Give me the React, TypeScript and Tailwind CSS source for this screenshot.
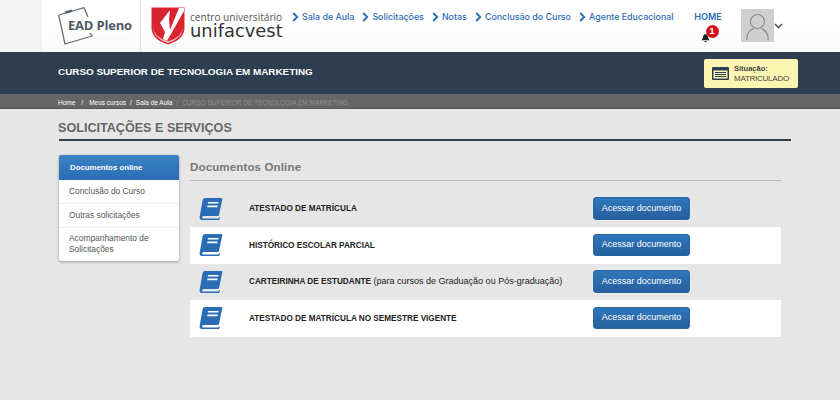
import React from "react";

const Chevron = () => (
  <svg width="7" height="10" viewBox="0 0 7 10" className="shrink-0">
    <path d="M1.2 1 L5.2 5 L1.2 9" fill="none" stroke="#2a6db5" strokeWidth="1.9" />
  </svg>
);

const Book = () => (
  <svg width="24" height="24" viewBox="0 0 24 23" className="shrink-0">
    <path d="M6 0.5 H22.5 Q23.6 0.5 23.3 1.8 L20 17.5 Q19.8 18.5 18.8 18.5 H5 Q3.2 18.5 3 20 Q3 21 4.4 21 H19 Q20 20.8 20.4 19.6 L21 20 L20.6 21.4 Q20.2 22.6 19 22.6 H3 Q0.2 22.6 0.6 19.6 L3.6 2.4 Q4 0.5 6 0.5 Z" fill="#2a6db5" />
    <rect x="8.6" y="4.4" width="10.6" height="1.7" fill="#fff" transform="skewX(-8) translate(1 0)" />
    <rect x="8" y="8" width="10.2" height="1.7" fill="#fff" transform="skewX(-8) translate(1.6 0)" />
  </svg>
);

const Shield = () => (
  <svg width="34" height="38" viewBox="0 0 34 38" className="shrink-0">
    <path d="M0.5 0.5 H33.5 V21 Q33.5 32 17 37.6 Q0.5 32 0.5 21 Z" fill="#d9252f" />
    <path d="M19 3 L9 16 L14 25 L12 32 L16 34 L33 4 L33 1 L28 1 L19 23 L18 12 Z" fill="#fff" />
    <path d="M2 21 Q2.5 31 17 36 Q31.5 31 32 21 Q31 30 17 34.6 Q3 30 2 21 Z" fill="#f7c9cb" />
  </svg>
);

const EadIcon = () => (
  <svg width="36" height="38" viewBox="0 0 36 38" className="absolute left-0 top-0">
    <path d="M0.7 8 L26 0.7 L30 10 M0.7 8 L7 37 L34 29 L32 26" fill="none" stroke="#66717a" strokeWidth="1.3" />
    <path d="M7 5.6 L14 3.6" stroke="#4e5a64" strokeWidth="2.2" />
  </svg>
);

const items = ["Sala de Aula", "Solicitações", "Notas", "Conclusão do Curso", "Agente Educacional"];

const docs: { t: React.ReactNode; white: boolean }[] = [
  { t: <span className="font-bold text-[8.2px]">ATESTADO DE MATRÍCULA</span>, white: false },
  { t: <span className="font-bold text-[8.2px]">HISTÓRICO ESCOLAR PARCIAL</span>, white: true },
  {
    t: (
      <>
        <span className="font-bold text-[8.2px]">CARTEIRINHA DE ESTUDANTE</span> (para cursos de Graduação ou Pós-graduação)
      </>
    ),
    white: false,
  },
  { t: <span className="font-bold text-[8.2px]">ATESTADO DE MATRÍCULA NO SEMESTRE VIGENTE</span>, white: true },
];

const side = ["Conclusão do Curso", "Outras solicitações"];

export default function App() {
  return (
    <div className="w-[840px] h-[400px] overflow-hidden bg-[#e6e6e6] font-['Liberation_Sans',Arial,sans-serif]">
      <header className="h-[52px] bg-gradient-to-b from-white to-[#f5f5f5] flex">
        <div className="w-[42px] bg-[#f3f3f3] shrink-0" />
        <div className="flex-1 flex bg-gradient-to-b from-white via-white to-[#f9f9f9]">
          <div className="w-[99px] relative h-full border-r border-[#e4e4e4] shrink-0">
            <div className="relative ml-[16px] mt-[7px] h-[38px]">
              <EadIcon />
              <span className="absolute left-[9px] top-[10px] bg-white px-px font-['Open_Sans',sans-serif] font-bold text-[13px] leading-[16px] text-[#4e5a64] whitespace-nowrap tracking-[-0.2px]">
                EAD Pleno
              </span>
            </div>
          </div>
          <div className="flex items-start pt-[7px] ml-[10px] shrink-0">
            <Shield />
            <div className="ml-[5px] w-[94px]">
              <div className="font-['Open_Sans',sans-serif] text-[10.1px] leading-[11px] mt-[5px] text-[#555] whitespace-nowrap">
                centro universitário
              </div>
              <div className="font-['DejaVu_Sans',sans-serif] text-[17.9px] leading-[16px] text-[#333] whitespace-nowrap">
                unifacvest
              </div>
            </div>
          </div>
          <nav className="flex gap-[8px] items-start ml-[8px] pt-[11px] shrink-0">
            {items.map((i) => (
              <div key={i} className="flex items-center gap-[3px] whitespace-nowrap">
                <Chevron />
                <span className="font-['Inter',sans-serif] font-medium text-[8.9px] leading-[12px] text-[#2a6db5]">{i}</span>
              </div>
            ))}
          </nav>
          <div className="ml-[21px] w-[27px] shrink-0 flex flex-col items-center pt-[11px]">
            <span className="font-['Inter',sans-serif] font-semibold text-[9px] leading-[11px] text-[#2a6db5]">HOME</span>
            <div className="relative mt-[11px] w-[10px] h-[10px] self-start ml-[6px]">
              <svg width="9" height="10" viewBox="0 0 11 11" className="block">
                <path d="M5.5 0.5 Q8.6 1 8.6 5 L10.4 8.4 H0.6 L2.4 5 Q2.4 1 5.5 0.5 Z M4 9.2 H7 Q6.8 10.6 5.5 10.6 Q4.2 10.6 4 9.2 Z" fill="#222" />
              </svg>
              <span className="absolute left-[5px] top-[-8px] w-[13px] h-[13px] rounded-full bg-[#d6121c] text-white text-[9px] font-bold leading-[13px] text-center">
                1
              </span>
            </div>
          </div>
          <div className="ml-[19px] mt-[9px] w-[33px] h-[33px] bg-[#cfcfcf] shrink-0">
            <svg width="33" height="33" viewBox="0 0 33 33" className="block">
              <circle cx="16.5" cy="12.5" r="7" fill="none" stroke="#8a8a8a" strokeWidth="1.2" />
              <path d="M6 31 Q5 23 12.5 19.5 M27 31 Q28 23 20.5 19.5" fill="none" stroke="#8a8a8a" strokeWidth="1.2" />
            </svg>
          </div>
          <svg width="9" height="6" viewBox="0 0 9 6" className="ml-[0px] mt-[23px] shrink-0">
            <path d="M1 1 L4.5 4.5 L8 1" fill="none" stroke="#555" strokeWidth="1.6" />
          </svg>
        </div>
      </header>

      <div className="h-[42px] bg-[#2c3e50] flex items-center pl-[58px] pr-[42px] justify-between">
        <h1 className="text-[9.9px] font-bold text-white leading-[14px] -mt-[2px]">CURSO SUPERIOR DE TECNOLOGIA EM MARKETING</h1>
        <div className="w-[94px] h-[29px] bg-[#fdf6b2] rounded-[2px] flex items-center pl-[8px] mt-[1px]">
          <svg width="17" height="13" viewBox="0 0 17 13" className="shrink-0">
            <rect x="0" y="0" width="17" height="13" rx="1" fill="#2c3e50" />
            <rect x="1.5" y="3.5" width="14" height="8" fill="#fdf6b2" />
            <path d="M3 5.5 H14 M3 7.5 H14 M3 9.5 H14" stroke="#2c3e50" strokeWidth="1" />
          </svg>
          <div className="ml-[5px]">
            <div className="text-[7.5px] leading-[9px] font-bold text-[#444]">Situação:</div>
            <div className="text-[8px] leading-[11px] tracking-[-0.25px] text-[#444] whitespace-nowrap">MATRICULADO</div>
          </div>
        </div>
      </div>

      <div className="h-[15px] bg-[#666666] border-b border-[#555] pt-[3px] flex items-center pl-[58px] text-[6.5px] text-white whitespace-nowrap">
        <span>Home</span>
        <span className="mx-[6px]">/</span>
        <span>Meus cursos</span>
        <span className="mx-[4px]">/</span>
        <span>Sala de Aula</span>
        <span className="mx-[4px] text-[#999]">/</span>
        <span className="text-[#8f8f8f]">CURSO SUPERIOR DE TECNOLOGIA EM MARKETING</span>
      </div>

      <div className="pl-[59px] w-[791px]">
        <div className="h-[32px] border-b-2 border-[#2c3e50] flex items-center">
          <h2 className="text-[12.6px] font-bold text-[#666] leading-[16px] mt-[8px] -ml-px">SOLICITAÇÕES E SERVIÇOS</h2>
        </div>
      </div>

      <div className="flex pl-[59px] pt-[14px]">
        <aside className="w-[120px] h-[106px] bg-white rounded-[2px] shadow-[0_1px_3px_rgba(0,0,0,0.35)] shrink-0 text-[8.4px] leading-[11px]">
          <div className="h-[25px] bg-gradient-to-b from-[#3b82c4] to-[#2a6db5] rounded-t-[2px] flex items-center pl-[11px] font-bold text-[7.8px] text-white">
            Documentos online
          </div>
          {side.map((s) => (
            <div key={s} className="h-[24px] border-b border-[#eeeeee] flex items-center pl-[10px] text-[#555]">
              {s}
            </div>
          ))}
          <div className="pl-[10px] pt-[5px] text-[#555]">
            Acompanhamento de
            <br />
            Solicitações
          </div>
        </aside>

        <main className="w-[591px] ml-[11px]">
          <div className="h-[26px] border-b border-[#bcbcbc] flex items-center">
            <h3 className="text-[11.5px] font-bold text-[#777] tracking-[0.15px]">Documentos Online</h3>
          </div>
          <div className="mt-[9.6px]">
            {docs.map((d, i) => (
              <div key={i} className={`h-[36.5px] flex items-center pl-[9px] ${d.white ? "bg-white" : ""}`}>
                <Book />
                <div className="ml-[26px] w-[344px] text-[9px] text-[#222] whitespace-nowrap">{d.t}</div>
                <button className="w-[97px] h-[22.5px] -mt-[1px] rounded-[3px] bg-gradient-to-b from-[#2f77bb] to-[#265f9e] text-white text-[9px] border border-[#2a649f] shadow-[0_0_2px_rgba(255,255,255,0.7)]">
                  Acessar documento
                </button>
              </div>
            ))}
          </div>
        </main>
      </div>
    </div>
  );
}
